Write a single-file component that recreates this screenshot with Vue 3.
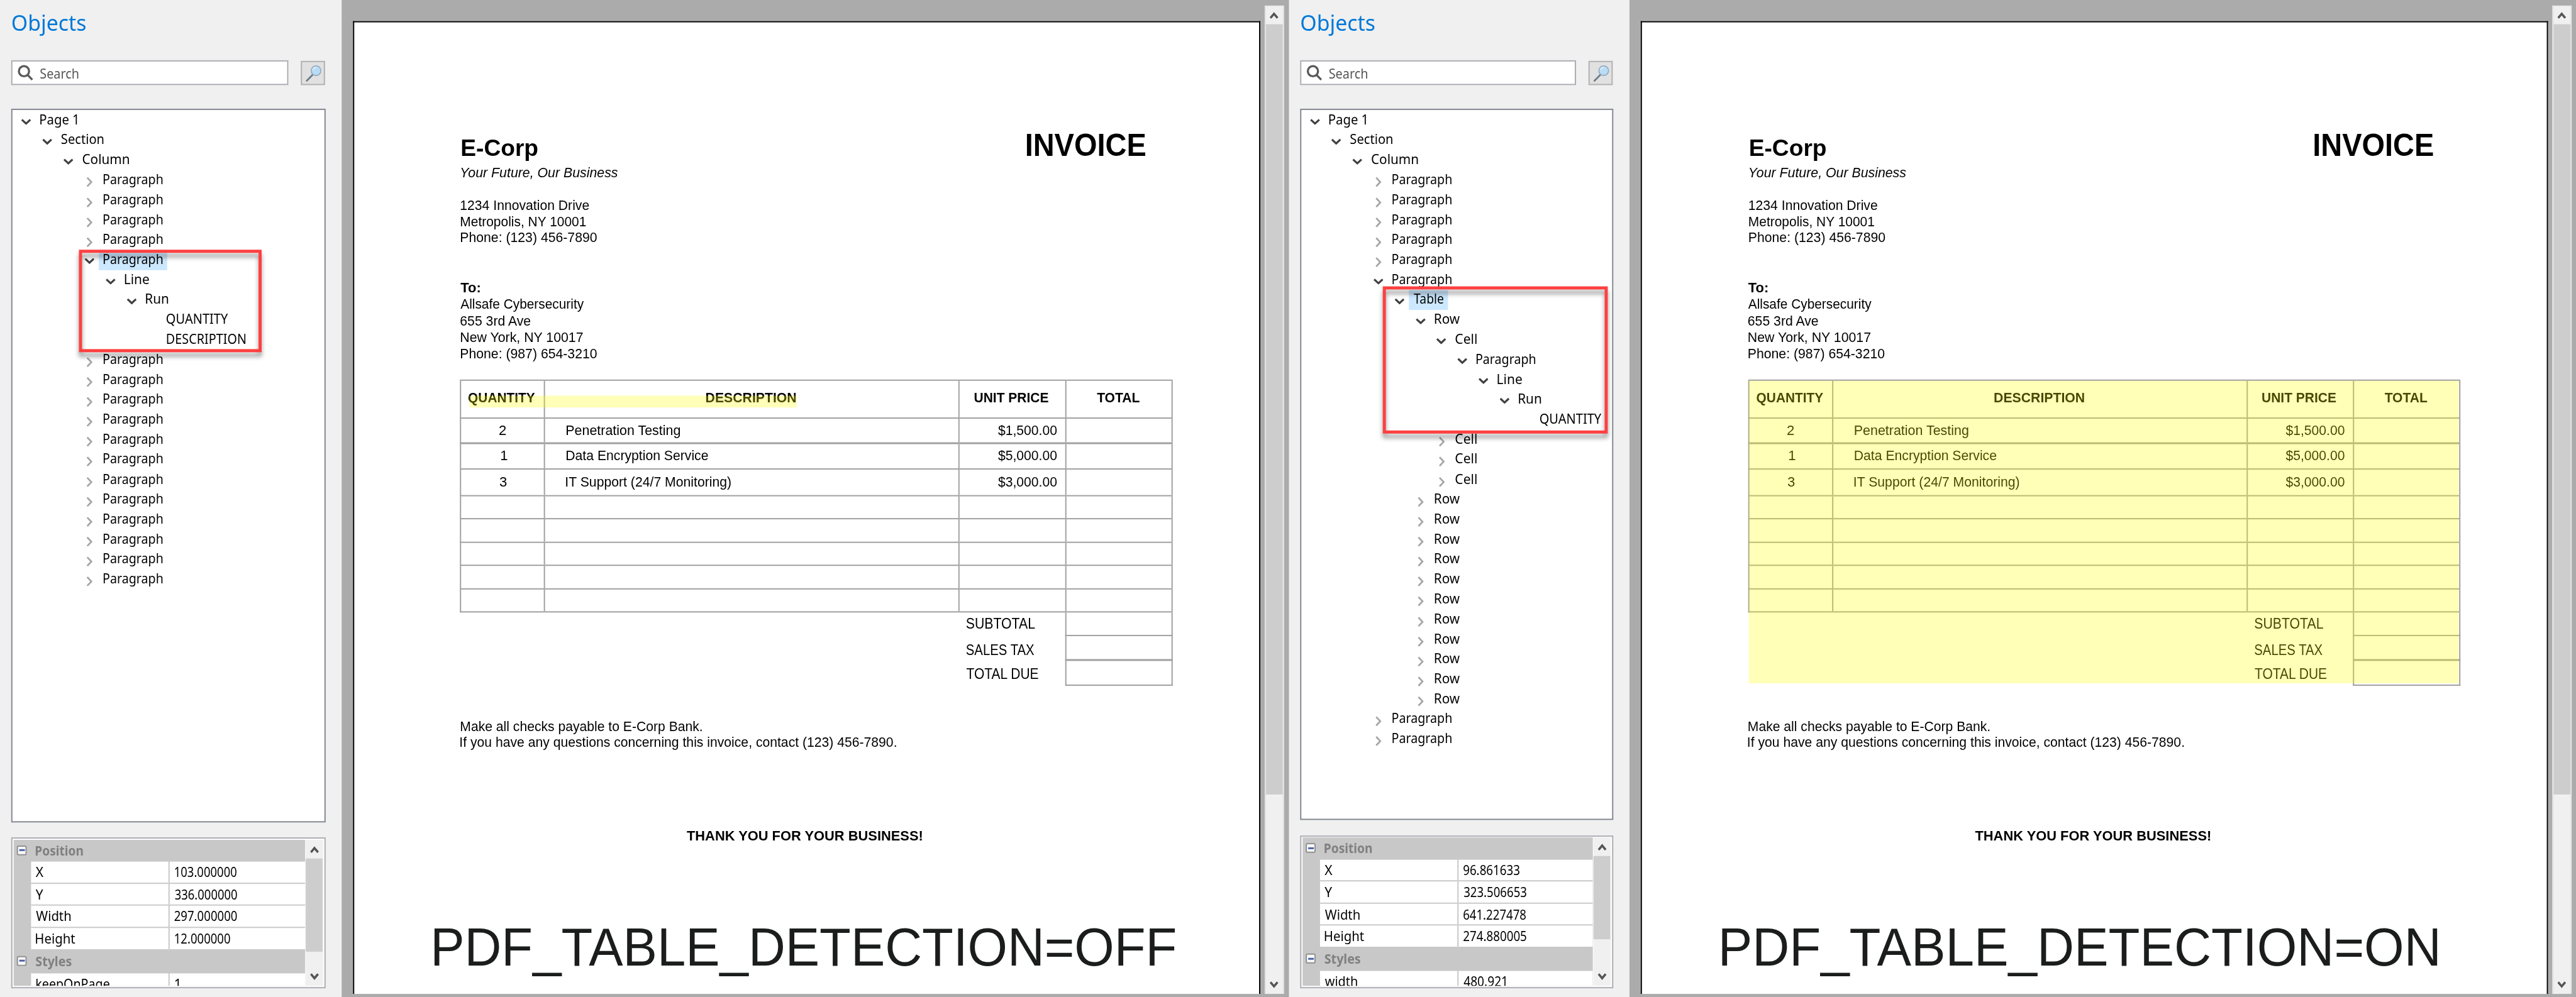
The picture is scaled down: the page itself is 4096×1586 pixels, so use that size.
<script setup>
const ink = {
  'Page 1': 59.3, Section: 68, Column: 75, Paragraph: 95, Line: 38.7, Run: 36,
  QUANTITY: 98.7, DESCRIPTION: 126.7, Table: 47.5, Row: 40.2, Cell: 34,
}

const node = (label, level, state = 'closed', selected = false) => ({ label, level, state, selected })
const repeat = (n, label, level) => Array.from({ length: n }, () => node(label, level))

const panes = [
  {
    id: 'off',
    caption: 'PDF_TABLE_DETECTION=OFF',
    captionWidth: 1192,
    tree: [
      node('Page 1', 0, 'open'), node('Section', 1, 'open'), node('Column', 2, 'open'),
      ...repeat(4, 'Paragraph', 3),
      node('Paragraph', 3, 'open', true), node('Line', 4, 'open'), node('Run', 5, 'open'),
      node('QUANTITY', 6, 'leaf'), node('DESCRIPTION', 6, 'leaf'),
      ...repeat(12, 'Paragraph', 3),
    ],
    position: [['X', 12, '103.000000', 100.3], ['Y', 12, '336.000000', 101], ['Width', 56, '297.000000', 101], ['Height', 63.5, '12.000000', 90]],
    styles: ['keepOnPage', 118, '1', 6],
  },
  {
    id: 'on',
    caption: 'PDF_TABLE_DETECTION=ON',
    captionWidth: 1151,
    tree: [
      node('Page 1', 0, 'open'), node('Section', 1, 'open'), node('Column', 2, 'open'),
      ...repeat(5, 'Paragraph', 3),
      node('Paragraph', 3, 'open'), node('Table', 4, 'open', true), node('Row', 5, 'open'),
      node('Cell', 6, 'open'), node('Paragraph', 7, 'open'), node('Line', 8, 'open'),
      node('Run', 9, 'open'), node('QUANTITY', 10, 'leaf'),
      ...repeat(3, 'Cell', 6), ...repeat(11, 'Row', 5), ...repeat(2, 'Paragraph', 3),
    ],
    position: [['X', 12, '96.861633', 90], ['Y', 12, '323.506653', 101], ['Width', 56, '641.227478', 101], ['Height', 63.5, '274.880005', 101]],
    styles: ['width', 52, '480.921', 68],
  },
]

const items = [
  ['2', 10.2, 'Penetration Testing', 184.3, '$1,500.00'],
  ['1', 6, 'Data Encryption Service', 228.5, '$5,000.00'],
  ['3', 10.2, 'IT Support (24/7 Monitoring)', 266, '$3,000.00'],
]
const sums = [['SUBTOTAL', 110.3], ['SALES TAX', 109.6], ['TOTAL DUE', 117]]

// Measures the visible extent of an element's text in its own font.
const ctx = document.createElement('canvas').getContext('2d')
function measure(el) {
  const s = getComputedStyle(el)
  ctx.font = `${s.fontStyle} ${s.fontWeight} ${s.fontSize} ${s.fontFamily}`
  const m = ctx.measureText(el.textContent)
  return { left: -m.actualBoundingBoxLeft, ink: m.actualBoundingBoxLeft + m.actualBoundingBoxRight, adv: m.width }
}

// v-track: condenses the text to the given width, in a box of exactly that width.
const vTrack = {
  mounted(el, { value }) {
    const m = measure(el)
    const k = el.textContent.length > 1 ? value / m.ink : 1
    el.style.width = `${value}px`
    el.style.transform = `scaleX(${k}) translateX(${-m.left}px)`
  },
}

// v-fit: the same for inline labels, which keep their own box.
const vFit = {
  mounted(el, { value }) {
    const m = measure(el)
    const k = el.textContent.length > 1 ? value / m.ink : 1
    el.style.transform = `scaleX(${k})`
    el.style.marginLeft = `${-m.left * k}px`
    el.style.marginRight = `${value - m.adv + m.left * k}px`
  },
}
</script>

<template>
  <div class="window">
    <div class="board">
      <section v-for="p in panes" :key="p.id" class="pane" :class="p.id">
        <aside class="side">
          <h1 class="title"><span v-fit="118.5" class="txt">Objects</span></h1>
          <div class="search-row">
            <div class="search">
              <svg class="glass" viewBox="0 0 26 26"><circle cx="10.6" cy="10.6" r="8.2" /><path d="M16.4 16.6 L24 24.4" /></svg>
              <span v-fit="61.5" class="txt">Search</span>
            </div>
            <div class="find">
              <svg viewBox="0 0 28 28">
                <path d="M12 16.5 L2.6 26" stroke="#6d7c8c" stroke-width="2.8" stroke-linecap="round" />
                <circle cx="17.5" cy="9.8" r="7.8" fill="#b9dcf4" stroke="#8fa9c0" stroke-width="1.6" />
                <path d="M12.5 8.5 A5.6 5.6 0 0 1 18 4.6" fill="none" stroke="#dff0fb" stroke-width="1.8" />
              </svg>
            </div>
          </div>

          <div class="tree">
            <div v-for="(n, i) in p.tree" :key="i" class="node" :style="{ paddingLeft: 14 + n.level * 33.9 + 'px' }">
              <span class="twist">
                <svg v-if="n.state === 'open'" class="down" viewBox="0 0 16 10"><path d="M1.2 1.6 L8 8 L14.8 1.6" /></svg>
                <svg v-else-if="n.state === 'closed'" class="right" viewBox="0 0 10 16"><path d="M1.4 1 L8 8 L1.4 15" /></svg>
              </span>
              <span class="label" :class="{ selected: n.selected }"><span v-fit="ink[n.label]" class="txt">{{ n.label }}</span></span>
            </div>
            <div class="marker"></div>
          </div>

          <div class="props">
            <div class="grid">
              <div class="group"><i class="minus"></i><span v-fit="77" class="txt">Position</span></div>
              <div v-for="r in p.position" :key="r[0]" class="prop">
                <div class="key"><span v-fit="r[1]" class="txt">{{ r[0] }}</span></div>
                <div class="val"><span v-fit="r[3]" class="txt">{{ r[2] }}</span></div>
              </div>
              <div class="group"><i class="minus"></i><span v-fit="58" class="txt">Styles</span></div>
              <div class="prop">
                <div class="key"><span v-fit="p.styles[1]" class="txt">{{ p.styles[0] }}</span></div>
                <div class="val"><span v-fit="p.styles[3]" class="txt">{{ p.styles[2] }}</span></div>
              </div>
            </div>
            <div class="bar small">
              <svg viewBox="0 0 14 12"><path d="M1.3 10 L7 3.2 L12.7 10" /></svg>
              <div class="thumb"></div>
              <svg viewBox="0 0 14 12"><path d="M1.3 2 L7 8.8 L12.7 2" /></svg>
            </div>
          </div>
        </aside>

        <main class="viewer">
          <article class="page">
            <header class="head">
              <div class="from">
                <div v-track="122.5" class="company">E-Corp</div>
                <div v-track="252" class="ln tagline">Your Future, Our Business</div>
              </div>
              <div v-track="191.3" class="invoice">INVOICE</div>
            </header>
            <div class="address">
              <div v-track="207" class="ln">1234 Innovation Drive</div>
              <div v-track="202.5" class="ln">Metropolis, NY 10001</div>
              <div v-track="219.5" class="ln">Phone: (123) 456-7890</div>
            </div>
            <div class="to">
              <div v-track="31.5" class="ln bold">To:</div>
              <div v-track="199" class="ln">Allsafe Cybersecurity</div>
              <div v-track="114" class="ln">655 3rd Ave</div>
              <div v-track="198" class="ln">New York, NY 10017</div>
              <div v-track="219.5" class="ln">Phone: (987) 654-3210</div>
            </div>

            <div class="table">
              <div class="row header">
                <div class="c1"><span v-track="108" class="ln bold">QUANTITY</span></div>
                <div class="c2"><span v-track="144.7" class="ln bold">DESCRIPTION</span></div>
                <div class="c3"><span v-track="119.4" class="ln bold">UNIT PRICE</span></div>
                <div class="c4"><span v-track="68.3" class="ln bold">TOTAL</span></div>
              </div>
              <div v-for="(r, i) in items" :key="r[2]" class="row item" :class="'item' + i">
                <div class="c1"><span v-track="r[1]" class="ln">{{ r[0] }}</span></div>
                <div class="c2"><span v-track="r[3]" class="ln">{{ r[2] }}</span></div>
                <div class="c3"><span v-track="94.6" class="ln">{{ r[4] }}</span></div>
                <div class="c4"></div>
              </div>
              <div v-for="k in 5" :key="k" class="row blank">
                <div class="c1"></div><div class="c2"></div><div class="c3"></div><div class="c4"></div>
              </div>
              <div v-for="(s, i) in sums" :key="s[0]" class="sum" :class="'sum' + i">
                <span v-track="s[1]" class="ln">{{ s[0] }}</span>
                <div class="amount"></div>
              </div>
              <div class="highlight"></div>
            </div>

            <div class="note">
              <div v-track="388.9" class="ln">Make all checks payable to E-Corp Bank.</div>
              <div v-track="701.4" class="ln">If you have any questions concerning this invoice, contact (123) 456-7890.</div>
            </div>
            <div v-track="379.7" class="ln bold thanks">THANK YOU FOR YOUR BUSINESS!</div>
            <div v-track="p.captionWidth" class="caption">{{ p.caption }}</div>
          </article>
          <div class="bar large">
            <svg viewBox="0 0 14 12"><path d="M1.3 10 L7 3.2 L12.7 10" /></svg>
            <div class="thumb"></div>
            <svg viewBox="0 0 14 12"><path d="M1.3 2 L7 8.8 L12.7 2" /></svg>
          </div>
        </main>
      </section>
    </div>
  </div>
</template>

<style>
html,
body {
  margin: 0;
  overflow: hidden;
  background: #ababab;
}
</style>

<style scoped>
* { box-sizing: border-box; }
.window { width: 4096px; height: 1586px; overflow: hidden; }
.board {
  display: flex;
  width: 4145px;
  height: 1605px;
  transform: scale(0.98818);
  transform-origin: 0 0;
  background: #ababab;
}
.pane { display: flex; height: 1605px; flex: none; }
.pane.off { width: 2074px; }
.pane.on { width: 2071px; }

/* sidebar */
.side {
  flex: none;
  display: flex;
  flex-direction: column;
  width: 549.5px;
  padding: 17px 25.5px 0 18px;
  background: #f0f0f0;
  font-family: "Noto Sans", "Open Sans", sans-serif;
  font-size: 21.2px;
  color: #000;
}
.on .side { width: 547.5px; }
.txt { display: inline-block; white-space: nowrap; transform-origin: 0 50%; }
.title { margin: 0 0 0 1.5px; height: 40px; line-height: 40px; font-size: 35px; font-weight: 400; color: #0078d7; }
.search-row { display: flex; align-items: flex-end; justify-content: space-between; margin-top: 39.5px; height: 40.5px; padding-right: 1px; }
.search { display: flex; width: 446px; height: 40.5px; padding: 4px 0 0 8px; border: 2px solid #abadb3; background: #fff; color: #555; line-height: 29px; }
.on .search { width: 444px; }
.glass { width: 26px; height: 26px; margin: 1px 10.5px 0 0; fill: none; stroke: #5a5a5a; stroke-width: 3.4; }
.find { width: 39.5px; height: 39.5px; padding: 4px 5px; border: 2px solid #b2b2b2; background: #e1e1e1; }
.find svg { display: block; width: 28px; height: 28px; }

.tree { position: relative; flex: none; margin-top: 38px; height: 1148.5px; padding-top: 1px; border: 2px solid #828790; background: #fff; }
.on .tree { height: 1145px; }
.node { display: flex; height: 32.15px; }
.twist { position: static; width: 16px; flex: none; }
.twist svg { display: block; fill: none; }
.down { width: 16px; height: 10px; margin-top: 12.5px; stroke: #404040; stroke-width: 3.2; }
.right { width: 10px; height: 16px; margin: 11px 0 0 3.5px; stroke: #a6a6a6; stroke-width: 2.8; }
.label { height: 32px; margin-left: 7.5px; padding: 0 7.5px; line-height: 28.5px; }
.label.selected { background: #cce8ff; }
.marker { position: absolute; border: 5px solid #ff4040; filter: drop-shadow(0 7px 4px rgba(0, 0, 0, 0.42)); }
.off .marker { left: 106.7px; top: 224.5px; width: 294.3px; height: 165.5px; }
.on .marker { left: 131.3px; top: 283.5px; width: 362px; height: 237px; }

.props { display: flex; flex: none; justify-content: space-between; margin-top: 24.5px; height: 242.5px; padding: 1.5px 2px 2px 1.5px; border: 2px solid #abadb3; background: #fff; }
.on .props { height: 246px; }
.grid { width: 469px; overflow: hidden; background: #c8c8c8; }
.on .grid { width: 467px; }
.group { display: flex; height: 35.5px; padding-left: 5.5px; line-height: 34px; font-weight: 700; color: #808080; }
.prop + .group { height: 37px; }
.minus { position: relative; width: 16px; height: 16px; margin: 9px 13.5px 0 0; border: 2px solid #919191; border-radius: 3px; background: #fafafa; }
.minus::after { content: ""; position: absolute; left: 1.5px; top: 4.5px; width: 9px; height: 3px; background: #4b63a7; }
.prop { display: flex; height: 35.65px; padding-left: 28.5px; line-height: 34.5px; }
.key { width: 221px; margin-right: 1.5px; padding-left: 7.5px; background: #fff; border-bottom: 2px solid #c8c8c8; }
.val { flex: 1; padding-left: 8.5px; background: #fff; border-bottom: 2px solid #c8c8c8; }

/* scroll bars */
.bar { display: flex; flex-direction: column; align-items: center; background: #f0f0f0; }
.bar svg { flex: none; width: 14px; height: 12px; fill: none; stroke: #555; stroke-width: 3.6; }
.bar .thumb { background: #cdcdcd; }
.small { width: 28.5px; }
.small svg:first-child { margin-top: 10px; }
.small .thumb { width: 27px; height: 150px; margin: 8px 0 34.5px; }
.on .small .thumb { height: 133.5px; margin-bottom: 54px; }
.large { position: relative; flex: none; width: 31px; height: 1591.5px; margin: 8.5px 0 0 6.5px; border: solid #e4e4e4; border-width: 1px 2px 0; }
.large svg:first-child { margin-top: 9.5px; }
.large .thumb { width: 27px; height: 1240px; margin: 8px 0 300px; }

/* document */
.viewer { display: flex; flex: 1; background: #ababab; }
.page {
  flex: none;
  width: 1460px;
  height: 1566.5px;
  margin: 33.5px 0 0 18.5px;
  padding: 173.9px 0 0 170px;
  border: solid #000;
  border-width: 2px 2px 0;
  background: #fff;
  color: #000;
  font-family: "Liberation Sans", Arial, sans-serif;
  font-size: 22.4px;
}
.on .page { padding-left: 170.5px; }
.ln { display: block; line-height: 26px; white-space: nowrap; transform-origin: 0 50%; }
.bold { font-weight: 700; }
.head { display: flex; justify-content: space-between; height: 82.3px; padding-right: 182.3px; white-space: nowrap; }
.from { padding: 8.2px 0 0 2px; }
.company { margin-left: 1px; line-height: 40px; font-size: 37.3px; font-weight: 700; transform-origin: 0 50%; }
.tagline { margin-top: 7.6px; font-style: italic; }
.invoice { line-height: 50px; font-size: 50px; font-weight: 700; transform-origin: 0 50%; }
.address { margin-top: 26.3px; padding-left: 1px; }
.address .ln { line-height: 26.2px; }
.to { margin-top: 54.2px; padding-left: 0.5px; }
.to .ln { line-height: 26.65px; }

.table { position: relative; width: 1146.8px; margin-top: 27.3px; border-top: 2px solid #a0a0a0; }
.row { display: flex; border: solid #a0a0a0; border-width: 0 0 2px 2px; }
.row > div { display: flex; justify-content: center; border-right: 2px solid #a0a0a0; }
.c1 { width: 135.3px; }
.c2 { width: 667.1px; }
.c3 { width: 171.4px; }
.c4 { width: 171px; }
.header { height: 60.7px; }
.header > div { padding: 15px 3px 0 0; }
.item > div { padding-top: 6.3px; }
.item > .c2 { justify-content: flex-start; padding-left: 34px; }
.item > .c3 { justify-content: flex-end; padding-right: 13.7px; }
.item0 { height: 40.9px; border-bottom-width: 3px; }
.item1 { height: 41.3px; }
.item2 { height: 42.5px; }
.blank { height: 37.56px; }
.sum { display: flex; justify-content: space-between; padding-left: 815.4px; font-size: 24.2px; }
.amount { width: 173px; border: solid #a0a0a0; border-width: 0 2px 2px; }
.sum0 { height: 37.2px; }
.sum0 .ln { margin-top: 5px; }
.sum1 { height: 40.8px; }
.sum1 .ln { margin-top: 8.9px; }
.sum1 .amount { border-bottom-width: 3px; }
.sum2 { height: 39.5px; }
.sum2 .ln { margin-top: 7.4px; }
.highlight { position: absolute; background: rgba(255, 255, 0, 0.28); }
.off .highlight { left: 14.5px; top: 23.5px; width: 527.5px; height: 19.5px; }
.on .highlight { left: 1.5px; top: 0; width: 1141.5px; height: 487px; }

.note { margin-top: 53.3px; padding-left: 0.5px; }
.note .ln { line-height: 25px; }
.thanks { margin: 125.8px 0 0 365.2px; }
.caption { margin: 119.7px 0 0 -41px; line-height: 90px; font-size: 86.5px; color: #1b1d1c; white-space: nowrap; transform-origin: 0 50%; }
.on .caption { margin-left: -42px; }
</style>
